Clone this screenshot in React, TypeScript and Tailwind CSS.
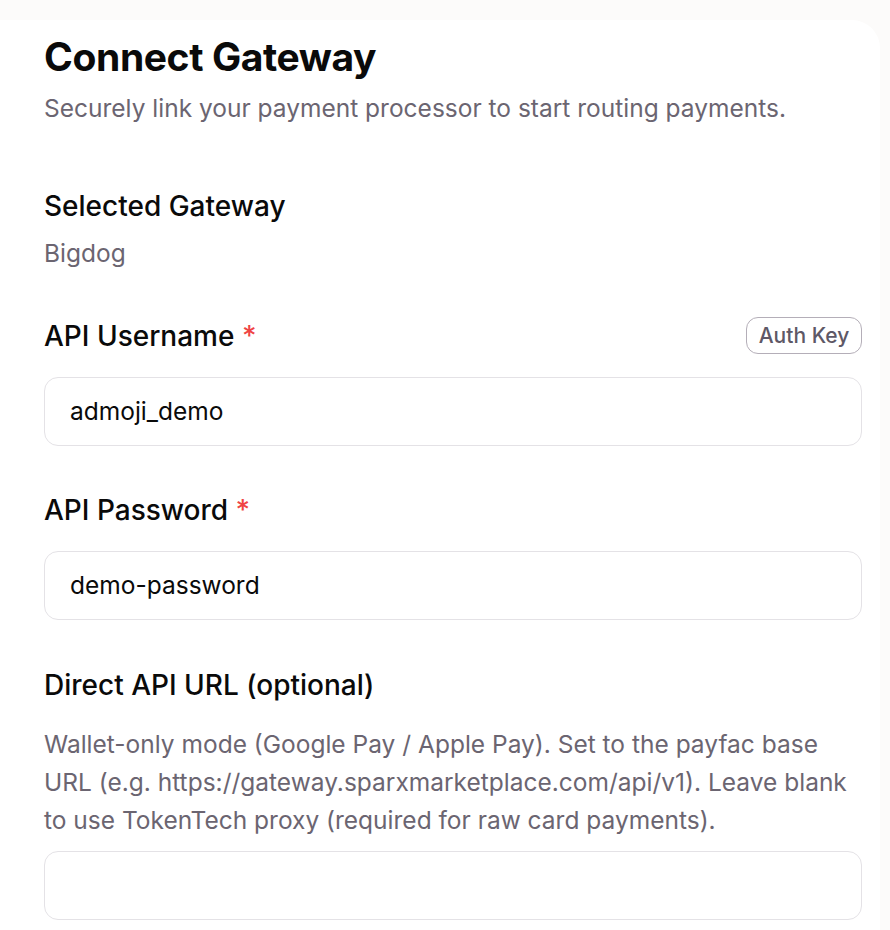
export default function App() {
  return (
    <div className="min-h-screen bg-[#fcfbfa] pt-[20px] font-['Inter',sans-serif]">
      <div className="w-[880px] rounded-tr-[28px] bg-white pl-[44px] pr-[18px] pt-[14px] pb-10">
        {/* Header */}
        <h1 className="text-[39px] font-bold leading-[46px] tracking-[-0.01em] text-[#0a0a0a]">
          Connect Gateway
        </h1>
        <p className="mt-[12px] text-[24.5px] leading-[32px] text-[#6b6571]">
          Securely link your payment processor to start routing payments.
        </p>

        {/* Selected gateway */}
        <div className="mt-[64px]">
          <div className="text-[28px] font-medium leading-[36px] text-[#0a0a0a]">Selected Gateway</div>
          <div className="mt-[13px] text-[24.5px] leading-[32px] text-[#6b6571]">Bigdog</div>
        </div>

        {/* API Username */}
        <div className="mt-[48px]">
          <div className="flex items-center justify-between">
            <label className="text-[28px] font-medium leading-[36px] text-[#0a0a0a]">
              API Username <span className="text-[#ef4444]">*</span>
            </label>
            <button className="h-[37px] w-[116px] rounded-[12px] border border-[#b4aeb8] text-[21px] font-medium text-[#5e5866]">
              Auth Key
            </button>
          </div>
          <div className="mt-[23px] flex h-[69px] items-center rounded-[14px] border border-[#e4e2e6] px-[25px] text-[24.5px] text-[#0a0a0a]">
            admoji_demo
          </div>
        </div>

        {/* API Password */}
        <div className="mt-[46px]">
          <label className="block text-[28px] font-medium leading-[36px] text-[#0a0a0a]">
            API Password <span className="text-[#ef4444]">*</span>
          </label>
          <div className="mt-[23px] flex h-[69px] items-center rounded-[14px] border border-[#e4e2e6] px-[25px] text-[24.5px] text-[#0a0a0a]">
            demo-password
          </div>
        </div>

        {/* Direct API URL */}
        <div className="mt-[47px]">
          <label className="block text-[28px] font-medium leading-[36px] text-[#0a0a0a]">
            Direct API URL (optional)
          </label>
          <p className="mt-[22px] text-[24.5px] leading-[38px] text-[#6b6571]">
            Wallet-only mode (Google Pay / Apple Pay). Set to the payfac base URL (e.g.
            https://gateway.sparxmarketplace.com/api/v1). Leave blank to use TokenTech proxy
            (required for raw card payments).
          </p>
          <div className="mt-[12px] h-[69px] rounded-[14px] border border-[#e4e2e6]" />
        </div>
      </div>
    </div>
  );
}
